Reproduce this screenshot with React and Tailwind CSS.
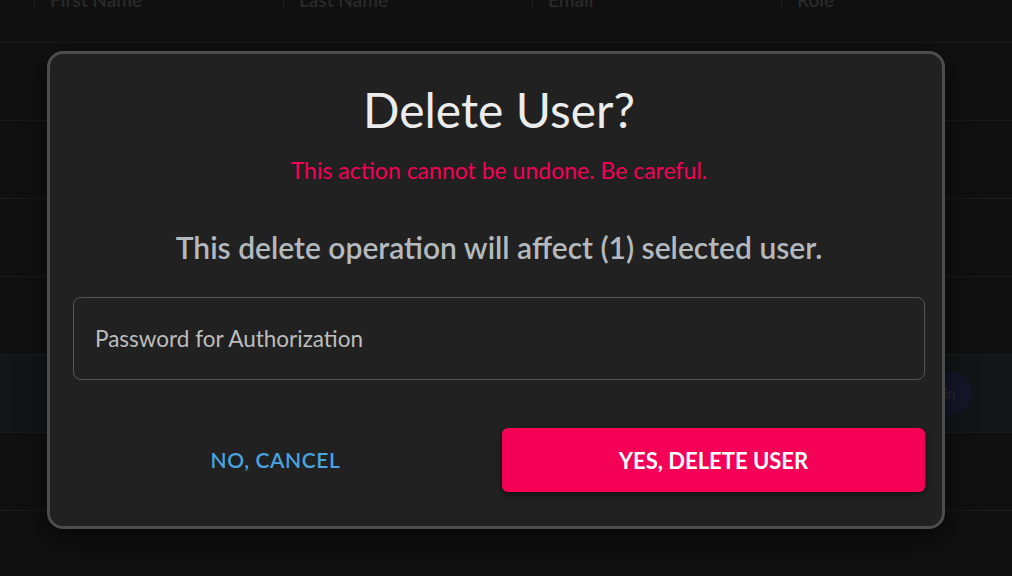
import React from "react";

const font = { fontFamily: "Lato, 'Open Sans', sans-serif" };

function Row({ highlight, children }) {
  return (
    <div
      className={
        "h-[78px] border-b border-[#1b1b1b] flex items-center " +
        (highlight ? "bg-[#131519]" : "")
      }
    >
      {children}
    </div>
  );
}

export default function App() {
  return (
    <div className="relative w-[1012px] h-[576px] overflow-hidden bg-[#101010]" style={font}>
      {/* table behind the dialog */}
      <div className="flex flex-col -mt-[14px]">
        <div className="h-[57px] border-b border-[#1b1b1b] flex items-start">
          {["First Name", "Last Name", "Email", "Role"].map((h) => (
            <div key={h} className="w-[249px] flex items-center pl-[34px]">
              <span className="w-[1px] h-[18px] bg-[#1e1e1e] mr-[15px]" />
              <span className="text-[19px] font-semibold text-[#2a2a2a]">{h}</span>
            </div>
          ))}
        </div>
        <Row />
        <Row />
        <Row />
        <Row />
        <Row highlight>
          <div className="ml-auto mr-[40px] flex items-center">
            <span className="px-[16px] py-[10px] rounded-full bg-[#15172a] text-[15px] font-semibold text-[#2a2c38]">
              Admin
            </span>
          </div>
        </Row>
        <Row />
      </div>

      {/* dialog */}
      <div className="absolute inset-0 flex items-start pl-[47px] pt-[51px]">
        <div className="w-[898px] h-[478px] rounded-[16px] border-[3px] border-[#4d4d4d] bg-[#212121] shadow-[0_10px_30px_rgba(0,0,0,0.6)] flex flex-col items-center pl-[23px] pr-[17px]">
          <h2 className="mt-[26px] text-[48px] leading-[60px] font-normal text-[#ececec]">
            Delete User?
          </h2>
          <p className="mt-[15px] text-[23px] leading-[30px] text-[#f50057]">
            This action cannot be undone. Be careful.
          </p>
          <p className="mt-[44px] text-[30px] leading-[36px] font-semibold text-[#b4b9be]">
            This delete operation will affect (1) selected user.
          </p>
          <div className="mt-[32px] w-full h-[83px] rounded-[8px] border border-[#545454] flex items-center px-[21px]">
            <span className="text-[22.5px] text-[#bdbdbd]">Password for Authorization</span>
          </div>
          <div className="mt-[48px] w-full flex items-center gap-[24px]">
            <button className="w-[405px] h-[64px] text-[21px] font-semibold tracking-[0.6px] text-[#4aa3df]">
              NO, CANCEL
            </button>
            <button className="flex-1 h-[64px] rounded-[6px] bg-[#f50057] text-white text-[22px] font-bold shadow-[0_3px_6px_rgba(0,0,0,0.45)]">
              YES, DELETE USER
            </button>
          </div>
        </div>
      </div>
    </div>
  );
}
